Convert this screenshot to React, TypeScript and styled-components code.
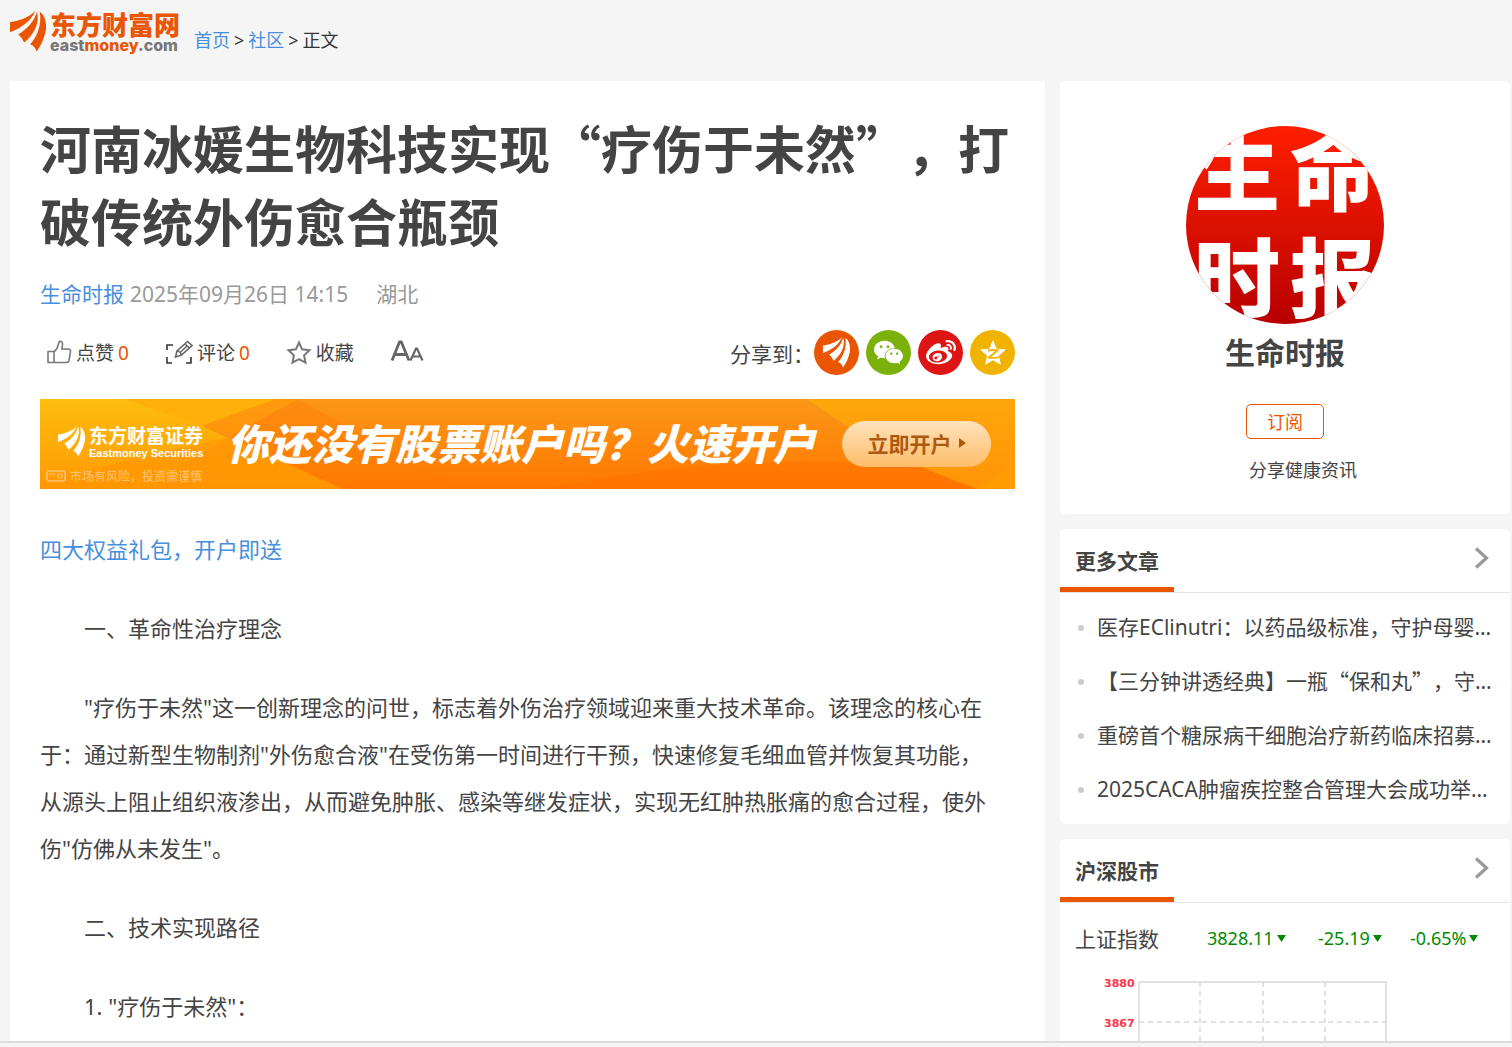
import React from "react";
import styled, { createGlobalStyle } from "styled-components";
import { AiFillWechat } from "react-icons/ai";
import { FaWeibo } from "react-icons/fa";

const latin = `"Noto Sans", "Noto Sans CJK SC", sans-serif`;
const cjk = `"Noto Sans CJK SC", sans-serif`;
const orange = "#ea5504";
const blue = "#478fdd";

const GlobalStyle = createGlobalStyle`
  * { box-sizing: border-box; }
  body {
    margin: 0;
    background: #f5f5f5;
    color: #444;
    font-family: ${latin};
    text-spacing-trim: space-all;
  }
  h1, h2, p, ul { margin: 0; padding: 0; }
  a { color: inherit; text-decoration: none; }
  button { font: inherit; color: inherit; background: none; border: 0; padding: 0; cursor: pointer; }
  svg { display: block; flex: none; }
`;

const Page = styled.div`
  height: 100vh;
  display: flex;
  flex-direction: column;
`;

const Scroller = styled.div`
  flex: 1;
  min-height: 0;
  overflow: hidden;
  padding: 0 2px 0 10px;
`;

const BottomBar = styled.footer`
  height: 6px;
  background: #f5f5f5;
  border-top: 2px solid #dcdcdc;
`;

const Header = styled.header`
  height: 81px;
  display: flex;
  align-items: flex-start;
  gap: 15px;
  padding-top: 9px;
`;

const Logo = styled.a`
  display: flex;
  gap: 4px;
`;

const LogoMark = styled.span`
  color: ${orange};
  padding-top: 2px;
`;

const LogoText = styled.span`
  display: flex;
  flex-direction: column;
  width: 129px;
`;

const LogoCn = styled.span`
  font: 900 26px/30px ${cjk};
  color: ${orange};
  white-space: nowrap;
`;

const LogoEn = styled.span`
  font: 800 16px/12px Inter, sans-serif;
  color: #777;
  b { color: ${orange}; font-weight: 800; }
`;

const Crumbs = styled.nav`
  padding-top: 18px;
  font-size: 18px;
  line-height: 26px;
  display: flex;
  gap: 4px;
  color: #333;
  a { color: ${blue}; }
`;

const Columns = styled.div`
  display: grid;
  grid-template-columns: minmax(0, 1fr) 450px;
  gap: 15px;
  align-items: start;
`;

const Article = styled.main`
  background: #fff;
  padding: 30px;
  min-height: 100vh;
`;

const Title = styled.h1`
  font: 700 51px/73px ${cjk};
  color: #444;
`;

const Meta = styled.div`
  margin-top: 21px;
  font-size: 21px;
  line-height: 32px;
  display: flex;
  color: #999;
  a { color: ${blue}; margin-right: 6px; }
  time { margin-right: 28px; }
`;

const Toolbar = styled.div`
  margin-top: 20px;
  display: flex;
  align-items: center;
  height: 45px;
  padding-left: 6px;
`;

const Action = styled.button`
  display: flex;
  align-items: center;
  gap: 4px;
  margin-right: 36px;
  font-size: 19px;
  line-height: 28px;
  white-space: nowrap;
  color: #444;
`;

const Count = styled.span`
  color: ${orange};
`;

const Share = styled.div`
  margin-left: auto;
  display: flex;
  align-items: center;
  font-size: 21px;
`;

const ShareLinks = styled.div`
  display: flex;
  gap: 7px;
`;

const ShareLink = styled.a<{ $color: string }>`
  width: 45px;
  height: 45px;
  border-radius: 50%;
  background: ${(p) => p.$color};
  color: #fff;
  display: flex;
  align-items: center;
  justify-content: center;
`;

const Banner = styled.a`
  position: relative;
  display: flex;
  align-items: center;
  height: 90px;
  margin-top: 24px;
  overflow: hidden;
  color: #fff;
  background: #ff8c08;
`;

const BannerArt = styled.svg`
  position: absolute;
  inset: 0;
  width: 100%;
  height: 100%;
`;

const Broker = styled.div`
  position: relative;
  width: 187px;
  padding: 24px 0 0 18px;
  height: 90px;
`;

const BrokerName = styled.div`
  display: flex;
  align-items: center;
  gap: 4px;
`;

const BrokerCn = styled.div`
  font: 700 19px/24px ${cjk};
`;

const BrokerEn = styled.div`
  font: 700 11px/13px "Liberation Sans", sans-serif;
  white-space: nowrap;
`;

const Risk = styled.div`
  display: flex;
  align-items: center;
  gap: 4px;
  margin: 9px 0 0 -12px;
  font: 400 12px/14px ${cjk};
  color: #ffd49a;
  opacity: 0.75;
`;

const Slogan = styled.div`
  position: relative;
  padding-bottom: 4px;
  font: italic 900 42px/60px ${cjk};
  white-space: nowrap;
`;

const OpenAccount = styled.span`
  position: relative;
  margin: 0 24px 0 auto;
  width: 149px;
  height: 46px;
  border-radius: 23px;
  display: flex;
  align-items: center;
  justify-content: center;
  gap: 7px;
  padding-bottom: 2px;
  font: 700 21px/30px ${cjk};
  color: #ad5a10;
  background: linear-gradient(#ffe2bd, #ffbd68);
`;

const Body = styled.div`
  margin-top: 37px;
  display: flex;
  flex-direction: column;
  gap: 32px;
  padding-right: 16px;
  font-size: 22px;
  line-height: 47px;
`;

const Para = styled.p`
  text-indent: 2em;
`;

const PromoLink = styled.a`
  color: ${blue};
`;

const Sidebar = styled.aside`
  display: flex;
  flex-direction: column;
  gap: 15px;
`;

const Panel = styled.section`
  background: #fff;
  border-radius: 5px;
`;

const Profile = styled(Panel)`
  display: flex;
  flex-direction: column;
  align-items: center;
  height: 433px;
  padding-top: 45px;
`;

const Avatar = styled.div`
  width: 198px;
  height: 198px;
  border-radius: 50%;
  overflow: hidden;
  display: grid;
  grid-template-columns: 96px 96px;
  grid-template-rows: 82px 132px;
  align-items: center;
  justify-content: center;
  justify-items: center;
  font: 900 86px/82px ${cjk};
  color: #fff;
  background: linear-gradient(#ff1e00, #d80f00 55%, #b80000);
`;

const Name = styled.h2`
  margin-top: 5px;
  font: 700 30px/44px ${cjk};
  color: #444;
`;

const Subscribe = styled.button`
  margin-top: 31px;
  width: 78px;
  height: 35px;
  border: 1px solid ${orange};
  border-radius: 5px;
  color: ${orange};
  font-size: 18px;
  line-height: 28px;
`;

const Intro = styled.p`
  margin-top: 17px;
  font-size: 18px;
  line-height: 28px;
  text-indent: 2em;
`;

const PanelHead = styled.header`
  display: flex;
  justify-content: space-between;
  height: 64px;
  padding-right: 20px;
  border-bottom: 1px solid #e6e6e6;
`;

const PanelTitle = styled.h2`
  width: 114px;
  padding-left: 15px;
  border-bottom: 5px solid ${orange};
  font: 700 21px/63px ${cjk};
  color: #444;
`;

const More = styled.a`
  padding-top: 17px;
`;

const List = styled.ul`
  list-style: none;
  padding: 8px 16px 7px 18px;
`;

const Item = styled.li`
  display: flex;
  align-items: center;
  gap: 13px;
  height: 54px;
  font-size: 21px;
  &::before {
    content: "";
    flex: none;
    width: 6px;
    height: 6px;
    border-radius: 50%;
    background: #ccc;
  }
  a {
    min-width: 0;
    padding-bottom: 4px;
    overflow: hidden;
    text-overflow: ellipsis;
    white-space: nowrap;
  }
`;

const Cjk = styled.span`
  font-family: ${cjk};
`;

const Quote = styled.div`
  display: grid;
  grid-template-columns: 132px 111px 92px 1fr;
  align-items: center;
  height: 70px;
  margin-bottom: 4px;
  padding-left: 15px;
  font-size: 21px;
`;

const Figure = styled.span`
  display: flex;
  align-items: center;
  gap: 3px;
  font-size: 18px;
  color: #008a00;
`;

const Chart = styled.svg`
  margin-left: 40px;
`;

const Feathers = ({ width, height }: { width: number; height: number }) => (
  <svg width={width} height={height} viewBox="0 0 104 118" fill="currentColor" aria-hidden="true">
    <path d="M0 32C28 29 54 18 73 0C62 27 34 49 0 61Z" />
    <path d="M24 67C51 52 70 29 78 2C87 32 70 68 41 91Q34 76 24 67Z" />
    <path d="M86 2C101 12 107 36 103 58C98 82 87 103 77 117Q72 101 58 96C80 72 92 38 86 2Z" />
  </svg>
);

const ThumbIcon = () => (
  <svg width="26" height="26" viewBox="0 0 26 26" fill="none" stroke="#777" strokeWidth="1.6" strokeLinejoin="round">
    <path d="M2 11.5h6v11H2zM8 12l3-3.500 2-6.200c.5-1.500 3.600-1.200 3.600 1.600L15.800 9H22c2 0 2.700 1 2.500 2.700L23 20.500c-.3 1.400-1 2-2.400 2H8" />
  </svg>
);

const CommentIcon = () => (
  <svg width="28" height="26" viewBox="0 0 28 26" fill="none" stroke="#666" strokeWidth="1.6">
    <path d="M8 5H2v5M2 17v6h5M26 17v6h-5" stroke="#333" />
    <path d="m10.500 17 1.500-6L22.500 1.500l4.500 4L16.500 15Zm1.500-6q3 0 4.500 4M20 4l4.500 4M14.500 13 22 6" />
  </svg>
);

const StarIcon = () => (
  <svg width="26" height="26" viewBox="0 0 26 26" fill="none" stroke="#777" strokeWidth="2">
    <path d="m13 2.500 3.100 6.800 7.400.9-5.400 5.100 1.400 7.400-6.500-3.600-6.500 3.600 1.400-7.400-5.400-5.100 7.400-.9Z" />
  </svg>
);

const FontIcon = () => (
  <svg width="34" height="26" viewBox="0 0 34 26" fill="none" stroke="#666">
    <path d="M2 20.500 9.500 2h1.800L19 20.500M5 14.500h11" strokeWidth="2.800" />
    <path d="M20.500 20.500 26 8.500h1L32.500 20.500M22.500 16.500h8" strokeWidth="2.200" />
  </svg>
);

const QzoneIcon = () => (
  <svg width="28" height="28" viewBox="0 0 28 28">
    <path d="m14 1 3.700 8.700 9.300.9-7.100 6.200L22 26l-8-4.800L6 26l2.100-9.200L1 10.600l9.300-.9Z" fill="#fff" />
    <path d="M9 11.500q5-1 9.500 0L10 18.500q5 1 10-.3" fill="none" stroke="#efb300" strokeWidth="1.800" />
  </svg>
);

const Chevron = () => (
  <svg width="17" height="24" viewBox="0 0 17 24" fill="none" stroke="#999" strokeWidth="3.200">
    <path d="m3 2.500 10.500 9.500L3 21.500" />
  </svg>
);

const Down = () => (
  <svg width="9" height="8" viewBox="0 0 9 8" fill="#008a00">
    <path d="M0 1h9L4.500 8Z" />
  </svg>
);

const shares = [
  { label: "东方财富", color: "#ea5504", icon: <Feathers width={27} height={31} /> },
  { label: "微信", color: "#7ab10a", icon: <AiFillWechat size={33} /> },
  { label: "微博", color: "#dd1515", icon: <FaWeibo size={30} /> },
  { label: "QQ空间", color: "#efb300", icon: <QzoneIcon /> },
];

const stories: React.ReactNode[] = [
  "医存EClinutri：以药品级标准，守护母婴营养健康",
  <>【三分钟讲透经典】一瓶<Cjk>“保和丸”，</Cjk>守护脾胃健康</>,
  "重磅首个糖尿病干细胞治疗新药临床招募正式启动",
  "2025CACA肿瘤疾控整合管理大会成功举办并发布指南",
];

export default function App() {
  return (
    <Page>
      <GlobalStyle />
      <Scroller>
        <Header>
          <Logo href="#">
            <LogoMark><Feathers width={36} height={41} /></LogoMark>
            <LogoText>
              <LogoCn>东方财富网</LogoCn>
              <LogoEn>east<b>money</b>.com</LogoEn>
            </LogoText>
          </Logo>
          <Crumbs>
            <a href="#">首页</a><span>&gt;</span><a href="#">社区</a><span>&gt;</span><span>正文</span>
          </Crumbs>
        </Header>
        <Columns>
          <Article>
            <Title>河南冰媛生物科技实现“疗伤于未然”，打破传统外伤愈合瓶颈</Title>
            <Meta>
              <a href="#">生命时报</a>
              <time>2025年09月26日 14:15</time>
              <span>湖北</span>
            </Meta>
            <Toolbar>
              <Action><ThumbIcon />点赞 <Count>0</Count></Action>
              <Action><CommentIcon />评论 <Count>0</Count></Action>
              <Action><StarIcon />收藏</Action>
              <Action aria-label="字号"><FontIcon /></Action>
              <Share>
                <span>分享到：</span>
                <ShareLinks>
                  {shares.map((s) => (
                    <ShareLink key={s.label} href="#" aria-label={s.label} $color={s.color}>{s.icon}</ShareLink>
                  ))}
                </ShareLinks>
              </Share>
            </Toolbar>
            <Banner href="#">
              <BannerArt viewBox="0 0 975 90" preserveAspectRatio="none" aria-hidden="true">
                <defs>
                  <linearGradient id="gold" x2="0" y2="1"><stop stopColor="#fdbd0d" /><stop offset="1" stopColor="#ff9a04" /></linearGradient>
                  <linearGradient id="deep" x2="0" y2="1"><stop stopColor="#fb9718" /><stop offset="1" stopColor="#ff7800" /></linearGradient>
                  <linearGradient id="amber" x2="0" y2="1"><stop stopColor="#ffa60c" /><stop offset="1" stopColor="#ff9406" /></linearGradient>
                </defs>
                <path d="M0 0H975V90H0Z" fill="url(#deep)" />
                <path d="M0 0H235L162 27L303 90H0Z" fill="url(#gold)" />
                <path d="M235 0H258L190 38L162 27Z" fill="#ff9a08" opacity=".7" />
                <path d="M85 0H235L162 27Z" fill="#ffab0a" opacity=".7" />
                <path d="M0 82L190 38L303 90H0Z" fill="#ff9502" opacity=".6" />
                <path d="M162 27L303 90H100L190 38Z" fill="#ff9304" opacity=".5" />
                <path d="M190 38L258 0L420 90H303Z" fill="#ff7c04" opacity=".35" />
                <path d="M767 0H975V90H937Q850 60 767 0Z" fill="url(#amber)" />
                <path d="M500 90Q700 50 880 68L937 90Z" fill="#ff6c00" opacity=".35" />
                <path d="M937 90L975 62V90Z" fill="#ff9c04" />
              </BannerArt>
              <Broker>
                <BrokerName>
                  <Feathers width={27} height={31} />
                  <div>
                    <BrokerCn>东方财富证券</BrokerCn>
                    <BrokerEn>Eastmoney Securities</BrokerEn>
                  </div>
                </BrokerName>
                <Risk>
                  <svg width="20" height="12" viewBox="0 0 20 12" fill="none" stroke="currentColor">
                    <rect x="1" y="1" width="18" height="10" rx="2" strokeWidth="1.500" />
                    <path d="M3 4h6M12 4h4v4h-4z" />
                  </svg>
                  市场有风险，投资需谨慎
                </Risk>
              </Broker>
              <Slogan>你还没有股票账户吗？火速开户</Slogan>
              <OpenAccount>
                立即开户
                <svg width="7" height="10" viewBox="0 0 7 10" fill="currentColor"><path d="M0 0L7 5L0 10Z" /></svg>
              </OpenAccount>
            </Banner>
            <Body>
              <p><PromoLink href="#">四大权益礼包，开户即送</PromoLink></p>
              <Para>一、革命性治疗理念</Para>
              <Para>"疗伤于未然"这一创新理念的问世，标志着外伤治疗领域迎来重大技术革命。该理念的核心在于：通过新型生物制剂"外伤愈合液"在受伤第一时间进行干预，快速修复毛细血管并恢复其功能，从源头上阻止组织液渗出，从而避免肿胀、感染等继发症状，实现无红肿热胀痛的愈合过程，使外伤"仿佛从未发生"。</Para>
              <Para>二、技术实现路径</Para>
              <Para>1. "疗伤于未然"：</Para>
            </Body>
          </Article>
          <Sidebar>
            <Profile>
              <Avatar><span>生</span><span>命</span><span>时</span><span>报</span></Avatar>
              <Name>生命时报</Name>
              <Subscribe>订阅</Subscribe>
              <Intro>分享健康资讯</Intro>
            </Profile>
            <Panel>
              <PanelHead>
                <PanelTitle>更多文章</PanelTitle>
                <More href="#" aria-label="更多文章"><Chevron /></More>
              </PanelHead>
              <List>
                {stories.map((s, i) => (
                  <Item key={i}><a href="#">{s}</a></Item>
                ))}
              </List>
            </Panel>
            <Panel>
              <PanelHead>
                <PanelTitle>沪深股市</PanelTitle>
                <More href="#" aria-label="沪深股市"><Chevron /></More>
              </PanelHead>
              <Quote>
                <span>上证指数</span>
                <Figure>3828.11<Down /></Figure>
                <Figure>-25.19<Down /></Figure>
                <Figure>-0.65%<Down /></Figure>
              </Quote>
              <Chart width="300" height="200" viewBox="0 0 300 200" fill="none" stroke="#d8d8d8" strokeWidth="1.500">
                <path d="M39 5H286V200M39 5V200" />
                <path d="M100 5V200M163 5V200M225 5V200M39 45H286" strokeDasharray="5 4" />
                <g fill="#ff3347" stroke="none" fontFamily="DejaVu Sans" fontSize="11" fontWeight="700">
                  <text x="4" y="10">3880</text>
                  <text x="4" y="50">3867</text>
                </g>
              </Chart>
            </Panel>
          </Sidebar>
        </Columns>
      </Scroller>
      <BottomBar />
    </Page>
  );
}
